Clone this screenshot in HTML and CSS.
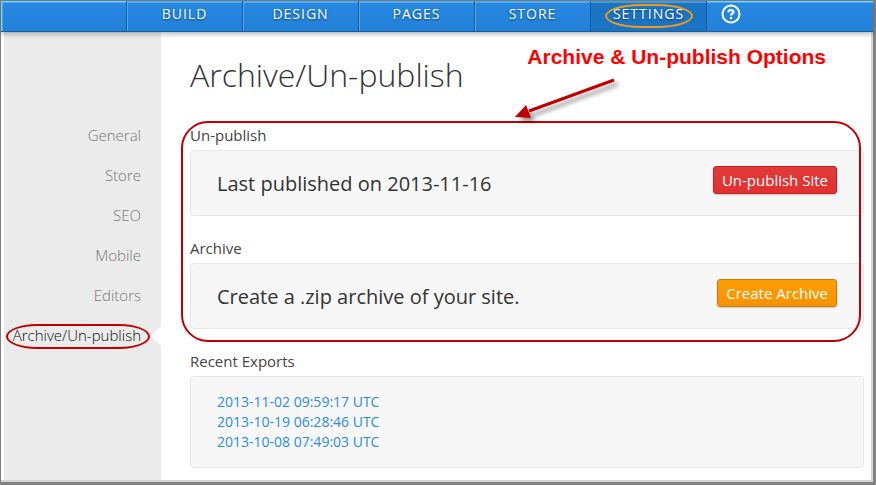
FILE: index.html
```html
<!DOCTYPE html>
<html lang="en">
<head>
  <meta charset="UTF-8">
  <meta name="viewport" content="width=device-width, initial-scale=1.0">
  <title>Archive/Un-publish</title>
  <link rel="stylesheet" href="styles.css">
</head>
<body>
  <div class="window">
    <header class="topbar">
      <nav class="topnav">
        <a href="#">BUILD</a>
        <a href="#">DESIGN</a>
        <a href="#">PAGES</a>
        <a href="#">STORE</a>
        <a href="#" class="active"><span class="ring-wrap">SETTINGS<span class="ring ring-orange"></span></span></a>
      </nav>
      <a class="help" href="#" aria-label="Help">
        <svg width="20" height="20" viewBox="0 0 20 20" fill="none" stroke="#fff">
          <circle cx="10" cy="10" r="8.5" stroke-width="2"/>
          <path d="M7.4 8.3C7.4 5.4 12.5 5.4 12.5 8.1C12.5 9.8 10 9.6 10 11.6" stroke-width="2.2"/>
          <circle cx="10" cy="14" r="1.3" fill="#fff" stroke="none"/>
        </svg>
      </a>
    </header>

    <div class="columns">
      <aside class="sidebar">
        <a href="#">General</a>
        <a href="#">Store</a>
        <a href="#">SEO</a>
        <a href="#">Mobile</a>
        <a href="#">Editors</a>
        <a href="#" class="current"><span class="ring-wrap">Archive/Un-publish<span class="ring ring-red"></span></span></a>
      </aside>

      <main class="content">
        <h1>Archive/Un-publish</h1>

        <!-- Highlighted options -->
        <div class="highlight">
          <section>
            <h2>Un-publish</h2>
            <div class="panel">
              <p>Last published on 2013-11-16</p>
              <button type="button" class="btn btn-red">Un-publish Site</button>
            </div>
          </section>
          <section>
            <h2>Archive</h2>
            <div class="panel">
              <p>Create a .zip archive of your site.</p>
              <button type="button" class="btn btn-orange">Create Archive</button>
            </div>
          </section>
          <div class="outline"></div>
          <div class="callout">
            <strong>Archive &amp; Un-publish Options</strong>
            <svg class="arrow" width="110" height="54" viewBox="0 0 110 54">
              <path d="M99 9L14 40" stroke="#c00000" stroke-width="3"/>
              <path d="M0 46L11 34L16 47Z" fill="#c00000"/>
            </svg>
          </div>
        </div>

        <section class="recent">
          <h2>Recent Exports</h2>
          <ul class="exports">
            <li><a href="#">2013-11-02 09:59:17 UTC</a></li>
            <li><a href="#">2013-10-19 06:28:46 UTC</a></li>
            <li><a href="#">2013-10-08 07:49:03 UTC</a></li>
          </ul>
        </section>
      </main>
    </div>
  </div>
</body>
</html>
```

FILE: styles.css
```css
* {
  box-sizing: border-box;
}

body {
  margin: 0;
  font-family: "Open Sans", sans-serif;
  font-size: 14px;
  color: #333;
  background: #fff;
}

a {
  text-decoration: none;
}

/* Window frame */
.window {
  display: flex;
  flex-direction: column;
  min-height: 100vh;
  border: 1px solid #808080;
  border-right: 3px solid #828282;
  border-bottom: 3px solid #828282;
  box-shadow: inset -2px -2px 0 #d4d4d4;
}

/* Top bar */
.topbar {
  position: relative;
  display: flex;
  height: 31px;
  padding-left: 125px;
  background: linear-gradient(#2689e2, #2280d8);
  border-bottom: 1px solid #145f98;
  box-shadow: inset 1px 1px 0 #70d5ff, inset 2px 2px 0 #49a9f2, 0 2px 5px rgba(0, 0, 0, 0.3);
}

.topnav {
  display: flex;
}

.topnav a {
  width: 116px;
  padding-top: 2px;
  border-left: 1px solid #155f9c;
  box-shadow: inset 1px 2px 0 #4da9f0;
  color: #fff;
  letter-spacing: 1px;
  line-height: 22px;
  text-align: center;
  text-shadow: 0 1px 2px rgba(0, 0, 0, 0.5);
}

.topnav .active {
  background: #1a74c3;
  box-shadow: inset 0 2px 0 #3f9ce0;
}

.help {
  padding: 3px 0 0 14px;
  border-left: 1px solid #155f9c;
}

.help svg {
  display: block;
}

/* Hand drawn rings around links */
.ring-wrap {
  position: relative;
}

.ring {
  position: absolute;
  border: 2px solid;
  border-radius: 50%;
}

.ring-orange {
  inset: 0 -9px -5px -8px;
  border-color: #f59a14;
  border-radius: 36px / 12px;
}

.ring-red {
  inset: -1px -9px -4px -7px;
  border-color: #c00000;
  border-radius: 32px / 13px;
}

/* Sidebar */
.columns {
  display: flex;
  flex: 1;
}

.sidebar {
  display: flex;
  flex-direction: column;
  flex: none;
  width: 157px;
  margin-left: 3px;
  margin-bottom: 2px;
  padding-top: 83px;
  background: #ebebeb;
}

.sidebar a {
  padding-right: 20px;
  color: #777;
  font-size: 15px;
  font-weight: 300;
  line-height: 40px;
  text-align: right;
  white-space: nowrap;
}

.sidebar .current {
  position: relative;
  color: #111;
}

.current::after {
  content: "";
  position: absolute;
  top: 11px;
  right: 0;
  border: 10px solid transparent;
  border-left: 0;
  border-right-color: #fff;
}

/* Content */
.content {
  flex: 1;
  padding: 18px 9px 12px 29px;
}

h1 {
  margin: 0;
  font-size: 32px;
  font-weight: 300;
  line-height: 50px;
}

h2 {
  margin: 0;
  color: #444;
  font-size: 15px;
  font-weight: 400;
  line-height: 30px;
}

.highlight {
  position: relative;
  margin-top: 20px;
}

.panel,
.exports {
  border: 1px solid #e8e8e8;
  border-radius: 4px;
  background: #f7f7f7;
}

.panel {
  display: flex;
  align-items: center;
  justify-content: space-between;
  height: 66px;
  padding: 0 26px;
}

.highlight section + section,
.recent {
  margin-top: 17px;
}

.panel p {
  margin: 0;
  font-size: 20px;
}

.btn {
  height: 28px;
  margin-bottom: 6px;
  padding: 0 8px;
  border: 1px solid;
  border-radius: 3px;
  box-shadow: 0 1px 2px rgba(0, 0, 0, 0.2);
  color: #fff;
  font-family: inherit;
  font-size: 15px;
  line-height: 24px;
  cursor: pointer;
}

.btn-red {
  background: linear-gradient(#e03a3a, #e33030);
  border-color: #c32020;
}

.btn-orange {
  background: linear-gradient(#ff9d05, #f79400);
  border-color: #c97a08;
}

.outline {
  position: absolute;
  inset: 1px 3px -13px -9px;
  border: 2px solid #c00000;
  border-radius: 27px;
  pointer-events: none;
}

.callout {
  position: absolute;
  right: 38px;
  bottom: 100%;
  padding-bottom: 51px;
  color: #f00;
  font-family: "Liberation Sans", Arial, sans-serif;
  font-size: 21px;
  line-height: 24px;
  white-space: nowrap;
  pointer-events: none;
}

.arrow {
  position: absolute;
  top: 26px;
  left: -12px;
  filter: drop-shadow(4px 4px 2px rgba(0, 0, 0, 0.4));
}

.exports {
  margin: 0;
  padding: 15px 26px;
  list-style: none;
  line-height: 20px;
}

.exports a {
  color: #2a8de0;
}
```
